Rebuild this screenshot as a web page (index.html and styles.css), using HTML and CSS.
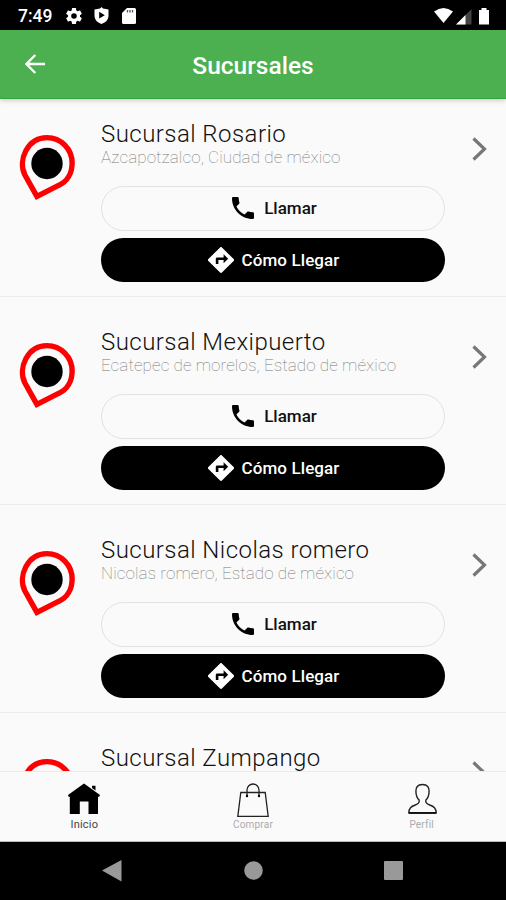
FILE: index.html
```
<!DOCTYPE html>
<html lang="es">
<head>
<meta charset="utf-8">
<title>Sucursales</title>
<link rel="stylesheet" href="styles.css">
</head>
<body>
<svg class="defs" aria-hidden="true">
  <symbol id="pin" viewBox="0 0 58 70"><path d="M18.900 63.400 6.800 41.800C-.2 27.600 9 4.600 29 4.600A25.100 25.100 0 0 1 54.100 30C54.100 40 49.500 48.500 40.500 52.400Z" fill="none" stroke="#f00" stroke-width="5.400"/><circle cx="29" cy="30.500" r="15.700"/></symbol>
  <symbol id="phone" viewBox="3 3 18 18"><path d="M6.620 10.790c1.440 2.830 3.760 5.140 6.590 6.590l2.200-2.200c.27-.27.67-.36 1.020-.24 1.120.37 2.330.57 3.570.57.55 0 1 .45 1 1V20c0 .55-.45 1-1 1C10.610 21 3 13.390 3 4c0-.55.45-1 1-1h3.500c.55 0 1 .45 1 1 0 1.250.2 2.450.57 3.570.11.35.03.74-.25 1.020z"/></symbol>
  <symbol id="directions" viewBox="2 2 20 20"><path fill="#fff" d="m21.710 11.290-9-9a1 1 0 0 0-1.420 0l-9 9a1 1 0 0 0 0 1.420l9 9c.39.39 1.020.39 1.420 0l9-9a1 1 0 0 0 0-1.420zM14 14.500V12h-4v3H8v-4c0-.55.45-1 1-1h5V7.500l3.500 3.500z"/></symbol>
  <symbol id="chevron" viewBox="0 0 15 24"><path d="m1.500 1.500 11 10.500-11 10.500" fill="none" stroke="#777" stroke-width="3.200"/></symbol>
</svg>
<div class="status">
  <span class="time">7:49</span>
  <svg class="gear" viewBox="2 2 20 20"><path fill="#fff" d="M19.430 12.980c.04-.32.07-.64.07-.98s-.03-.66-.07-.98l2.110-1.650a.5.5 0 0 0 .12-.64l-2-3.460a.5.5 0 0 0-.61-.22l-2.490 1a7.300 7.300 0 0 0-1.690-.98l-.38-2.650A.49.49 0 0 0 14 2h-4a.49.49 0 0 0-.49.42l-.38 2.650c-.61.25-1.170.59-1.690.98l-2.490-1a.49.49 0 0 0-.61.22l-2 3.460a.49.49 0 0 0 .12.64l2.110 1.650a7.900 7.900 0 0 0 0 1.960l-2.110 1.650a.5.5 0 0 0-.12.64l2 3.460c.12.22.39.3.61.22l2.490-1c.52.4 1.080.73 1.690.98l.38 2.650c.03.24.24.42.49.42h4c.25 0 .46-.18.49-.42l.38-2.650c.61-.25 1.170-.59 1.690-.98l2.490 1c.23.09.49 0 .61-.22l2-3.460a.5.5 0 0 0-.12-.64zM12 15.500a3.500 3.500 0 1 1 0-7 3.500 3.500 0 0 1 0 7z"/></svg>
  <svg class="shield" viewBox="0 0 15 17"><path fill="#fff" d="M7.500 0 9 1.600l5.500.8V8.500C14.500 12.500 12 15.500 7.500 17 3 15.500.5 12.500.5 8.500V2.400L6 1.600z"/><path d="m5.200 4.800 5.600 3.400-5.600 3.400z"/></svg>
  <svg class="sd" viewBox="0 0 14 16"><path fill="#fff" d="M5 0h7.500Q14 0 14 1.500v13q0 1.500-1.500 1.500h-11Q0 16 0 14.500V5z"/><path d="M5.500 2v2.500M8 2v2.500M10.500 2v2.500" stroke="#555" stroke-width="1.300"/></svg>
  <svg class="signals" viewBox="0 0 58 18"><path fill="#fff" d="M0 4.500Q9.500-2.500 19 4.500L9.500 16z"/><path fill="#444" d="M22 17.500 37.500 2v15.500z"/><path fill="#fff" d="M22 17.500 31.500 8v9.500zM47.500 1h5v2H55v14.500H45V3h2.500z"/></svg>
</div>
<header class="appbar">
  <svg class="back" viewBox="0 0 20 20"><path d="M20 10H1.500M10.300 1 1.400 10l8.900 9" fill="none" stroke="#fff" stroke-width="2.400"/></svg>
  <h1>Sucursales</h1>
</header>
<main class="list">
  <article class="branch">
    <svg class="pin"><use href="#pin"/></svg>
    <div class="info"><h2>Sucursal Rosario</h2><p>Azcapotzalco, Ciudad de méxico</p>
      <button class="call"><svg><use href="#phone"/></svg><span>Llamar</span></button>
      <button class="route"><svg><use href="#directions"/></svg><span>Cómo Llegar</span></button></div>
    <svg class="chevron"><use href="#chevron"/></svg>
  </article>
  <article class="branch">
    <svg class="pin"><use href="#pin"/></svg>
    <div class="info"><h2>Sucursal Mexipuerto</h2><p>Ecatepec de morelos, Estado de méxico</p>
      <button class="call"><svg><use href="#phone"/></svg><span>Llamar</span></button>
      <button class="route"><svg><use href="#directions"/></svg><span>Cómo Llegar</span></button></div>
    <svg class="chevron"><use href="#chevron"/></svg>
  </article>
  <article class="branch">
    <svg class="pin"><use href="#pin"/></svg>
    <div class="info"><h2>Sucursal Nicolas romero</h2><p>Nicolas romero, Estado de méxico</p>
      <button class="call"><svg><use href="#phone"/></svg><span>Llamar</span></button>
      <button class="route"><svg><use href="#directions"/></svg><span>Cómo Llegar</span></button></div>
    <svg class="chevron"><use href="#chevron"/></svg>
  </article>
  <article class="branch">
    <svg class="pin"><use href="#pin"/></svg>
    <div class="info"><h2>Sucursal Zumpango</h2></div>
    <svg class="chevron"><use href="#chevron"/></svg>
  </article>
</main>
<nav class="tabs">
  <a class="tab active"><svg viewBox="0 0 34 36"><path d="M17 1.500 33 13l-.8 1.800H31V32H21.500V19.500H12.800V32H2.800V14.800H1.600L1 13zM25 3.800h3.500v4.700L25 6z"/></svg><span>Inicio</span></a>
  <a class="tab"><svg viewBox="0 0 34 36"><path d="M4.800 10.500h24.400l3 23.800H1.800zM11 14V8a6 6 0 0 1 12 0v6" fill="none" stroke="#222" stroke-width="1.300"/><circle cx="11" cy="14" r="1.200"/><circle cx="23" cy="14" r="1.200"/></svg><span>Comprar</span></a>
  <a class="tab"><svg viewBox="0 0 34 36"><path d="M17.500 2.500C12.500 2.500 10.700 5.500 10.900 9.500c.1 4 .9 6.500 3.200 8.500.8 3-1 4-3.800 5C6 24.500 4 26 3.800 30.800h27.400c-.2-4.800-2.200-6.300-6.500-7.800-2.800-1-4.600-2-3.800-5 2.300-2 3.100-4.500 3.200-8.500.2-4-1.600-7-6.600-7z" fill="none" stroke="#222" stroke-width="1.400"/><path d="M3.800 31h27.400" stroke="#111" stroke-width="1.800"/></svg><span>Perfil</span></a>
</nav>
<footer class="system">
  <svg viewBox="0 0 506 58"><path d="M102 28.500 121.500 18v21.500z"/><circle cx="253.500" cy="28.500" r="9.300"/><rect x="384" y="19" width="19" height="19" rx="1"/></svg>
</footer>
</body>
</html>
```
FILE: styles.css
```
* { box-sizing: border-box; }
body { margin: 0; width: 506px; height: 900px; overflow: hidden; display: flex; flex-direction: column; background: #fafafa; color: #111; font-family: Roboto, "Liberation Sans", sans-serif; }
svg { display: block; flex: none; }
h1, h2, p { margin: 0; white-space: nowrap; }
.defs { display: none; }
.status { height: 30px; flex: none; background: #000; display: flex; align-items: center; padding: 1px 14px 0 18px; color: #fff; }
.time { font-size: 17.5px; font-weight: 500; width: 48px; }
.gear { width: 16px; height: 16px; }
.shield { width: 15px; height: 17px; margin-left: 12px; }
.sd { width: 14px; height: 16px; margin-left: 13px; }
.signals { width: 58px; height: 18px; margin-left: auto; }
.appbar { position: relative; z-index: 1; height: 69px; flex: none; background: #4caf50; border-bottom: 1px solid #35a63c; box-shadow: 0 1px 5px rgba(60, 0, 0, .25); display: grid; grid-template-columns: 80px 1fr 80px; align-items: center; color: #fff; }
.back { width: 20px; height: 20px; margin-left: 25px; }
h1 { text-align: center; font-size: 24.5px; font-weight: 500; line-height: 30px; padding-top: 3px; }
.list { flex: 1; min-height: 0; overflow: hidden; }
.branch { height: 208px; display: flex; align-items: flex-start; padding: 31px 19px 0 18px; border-bottom: 1px solid #ececec; }
.branch:first-child { height: 198px; padding-top: 21px; }
.pin { width: 58px; height: 70px; margin-top: 13px; }
.info { width: 344px; margin-left: 25px; }
h2 { font-size: 24px; font-weight: 300; line-height: 28px; letter-spacing: .45px; }
p { font-size: 17px; font-weight: 100; line-height: 20px; letter-spacing: .1px; color: #777; margin-top: -1px; }
button { width: 344px; height: 45px; border-radius: 23px; display: flex; align-items: center; justify-content: center; font: 500 17px Roboto, sans-serif; padding: 0; }
.call { margin-top: 18.500px; background: #fafafa; border: 1.500px solid #e2e2e2; color: #111; gap: 10px; padding-left: 3px; }
.call svg { width: 22px; height: 22px; }
.route { height: 44px; margin-top: 7px; background: #000; color: #fff; border: 0; gap: 8px; padding-left: 1px; letter-spacing: .1px; }
.route svg { width: 26px; height: 26px; }
.chevron { width: 15px; height: 24px; margin: 17px 0 0 auto; }
.tabs { height: 71px; flex: none; border-top: 1px solid #ebebeb; border-bottom: 1px solid #bbb; display: grid; grid-template-columns: repeat(3, 1fr); }
.tab { display: flex; flex-direction: column; align-items: center; padding-top: 10px; font-size: 10px; line-height: 14px; color: #aaa; letter-spacing: .2px; }
.tab svg { width: 34px; height: 36px; }
.tab.active { font-size: 11px; color: #444; }
.system { height: 58px; flex: none; background: #000; }
.system svg { width: 506px; height: 58px; fill: #999; }
```
